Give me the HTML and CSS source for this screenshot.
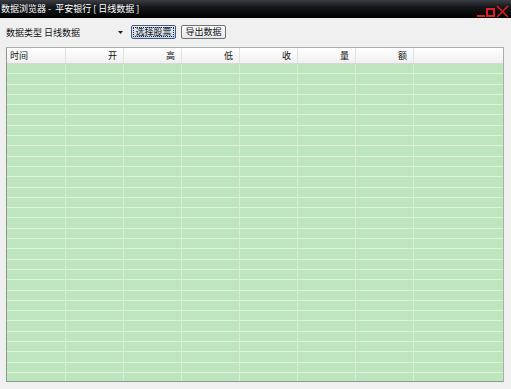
FILE: index.html
```html
<!DOCTYPE html>
<html>
<head>
<meta charset="utf-8">
<link rel="stylesheet" href="styles.css">
</head>
<body>
<div class="window">
  <div class="titlebar">
    <span class="title">数据浏览器 - &nbsp;平安银行 [ 日线数据 ]</span>
    <div class="controls">
      <span class="ctl min"></span>
      <span class="ctl max"></span>
      <svg class="ctl close" width="13" height="13" viewBox="0 0 13 13"><path d="M1 1L12 12M12 1L1 12" stroke="#e02020" stroke-width="1.5"/></svg>
    </div>
  </div>
  <div class="toolbar">
    <span class="label">数据类型</span>
    <div class="combo"><span>日线数据</span><svg width="5" height="3" viewBox="0 0 5 3"><path d="M0 0H5L2.5 3Z" fill="#222"/></svg></div>
    <button class="btn focused">选择股票</button>
    <button class="btn">导出数据</button>
  </div>
  <div class="grid">
    <div class="head">
      <div class="c c1 left">时间</div>
      <div class="c">开</div>
      <div class="c">高</div>
      <div class="c">低</div>
      <div class="c">收</div>
      <div class="c">量</div>
      <div class="c">额</div>
      <div class="c last"></div>
    </div>
    <div class="body">
      <div class="cols">
        <div class="col c1"></div><div class="col"></div><div class="col"></div><div class="col"></div><div class="col"></div><div class="col"></div><div class="col"></div><div class="col last"></div>
      </div>
    </div>
  </div>
</div>
</body>
</html>
```
FILE: styles.css
```css
* { box-sizing: border-box; }
html, body { margin: 0; padding: 0; }
body {
  width: 511px; height: 389px; overflow: hidden;
  background: #f0f0f0;
  font-family: "Noto Sans CJK SC", "DejaVu Sans", sans-serif;
  font-size: 9px; color: #111;
}
.window { display: flex; flex-direction: column; height: 389px; }
.titlebar {
  height: 18px; flex: none;
  background: linear-gradient(to bottom, #3a3d44 0%, #15171b 40%, #000 100%);
  display: flex; align-items: center; justify-content: space-between;
  padding: 0 2px 0 1px;
}
.title { color: #fff; font-size: 9px; line-height: 18px; }
.controls { display: flex; align-items: flex-end; gap: 1px; height: 14px; margin-top: 3px; }
.ctl { display: block; }
.min { width: 8px; height: 2px; background: #e02020; margin-bottom: 1px; }
.max { width: 9px; height: 9px; border: 2px solid #e02020; margin-bottom: 1px; }
.toolbar {
  height: 28px; flex: none;
  display: flex; align-items: center;
  padding: 0 6px 0 6px;
}
.label { margin-right: 2px; }
.combo {
  width: 83px; height: 14px;
  display: flex; align-items: center; justify-content: space-between;
  padding: 0 4px 0 0;
}
.combo svg { display: block; }
.btn {
  font-family: inherit; font-size: 9px; color: #111;
  width: 45px; height: 14px; padding: 0; line-height: 12px;
  border: 1px solid #707070; border-radius: 2px;
  background: linear-gradient(#fdfdfd, #e4e6ea);
}
.btn.focused {
  margin-left: 4px;
  background: linear-gradient(#e8eef8, #c9d6ea);
  outline: 1px dotted #222; outline-offset: -3px;
  border-color: #3c5a8a;
}
.btn + .btn { margin-left: 5px; }
.grid {
  flex: 1; margin: 1px 7px 7px 6px;
  border: 1px solid #a9b0a9;
  border-left-color: #8a9a8a; border-bottom-color: #8a9a8a;
  display: flex; flex-direction: column;
  background: #c0e6c0;
}
.head {
  height: 16px; flex: none; display: flex;
  background: linear-gradient(#ffffff, #f0f0f0);
  border-bottom: 1px solid #d8d8d8;
}
.c {
  width: 58px; flex: none; text-align: right; padding-right: 6px;
  line-height: 15px; border-right: 1px solid #e2e2e2;
}
.c.c1 { width: 59px; }
.c.left { text-align: left; padding-left: 3px; }
.c.last { flex: 1; border-right: none; }
.body {
  flex: 1; position: relative;
  background: repeating-linear-gradient(to bottom, #bfe5bf 0, #bfe5bf 9.3px, #def3da 9.3px, #def3da 10.3px);
}
.cols { display: flex; height: 100%; }
.col { width: 58px; flex: none; border-right: 1px solid #d8efd4; }
.col.c1 { width: 59px; }
.col.last { flex: 1; border-right: none; }
```
